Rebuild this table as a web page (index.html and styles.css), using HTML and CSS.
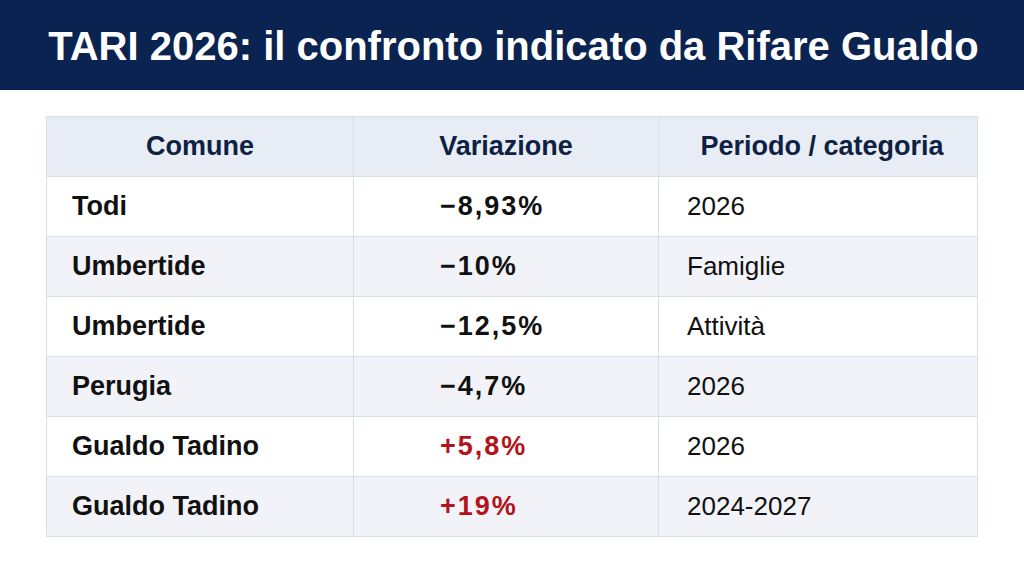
FILE: index.html
```html
<!DOCTYPE html>
<html lang="it">
<head>
<meta charset="utf-8">
<link rel="stylesheet" href="styles.css">
</head>
<body>
<header class="banner">
  <h1 class="title">TARI 2026: il confronto indicato da Rifare Gualdo</h1>
</header>
<main class="content">
  <table class="tari">
    <thead>
      <tr>
        <th class="c1">Comune</th>
        <th class="c2">Variazione</th>
        <th class="c3">Periodo / categoria</th>
      </tr>
    </thead>
    <tbody>
      <tr><td class="c1">Todi</td><td class="c2 neg">−8,93%</td><td class="c3">2026</td></tr>
      <tr><td class="c1">Umbertide</td><td class="c2 neg">−10%</td><td class="c3">Famiglie</td></tr>
      <tr><td class="c1">Umbertide</td><td class="c2 neg">−12,5%</td><td class="c3">Attività</td></tr>
      <tr><td class="c1">Perugia</td><td class="c2 neg">−4,7%</td><td class="c3">2026</td></tr>
      <tr><td class="c1">Gualdo Tadino</td><td class="c2 pos">+5,8%</td><td class="c3">2026</td></tr>
      <tr><td class="c1">Gualdo Tadino</td><td class="c2 pos">+19%</td><td class="c3">2024-2027</td></tr>
    </tbody>
  </table>
</main>
</body>
</html>
```
FILE: styles.css
```css
html, body {
  margin: 0;
  padding: 0;
  background: #ffffff;
  font-family: "Liberation Sans", Arial, sans-serif;
}
.banner {
  height: 90px;
  background: #0b2350;
  display: flex;
  align-items: center;
  justify-content: center;
}
.title {
  margin: 0;
  color: #ffffff;
  font-size: 40px;
  font-weight: 700;
  line-height: 1;
  padding-top: 2px;
  padding-left: 3px;
}
.content {
  padding: 26px 46px 0 46px;
}
.tari {
  width: 932px;
  border-collapse: collapse;
  table-layout: fixed;
  border: 1px solid #d9dfe8;
}
.tari th, .tari td {
  height: 59px;
  border: 1px solid #d9dfe8;
  padding: 0;
  vertical-align: middle;
}
.tari th {
  background: #e8edf5;
  color: #0f2142;
  font-size: 27px;
  font-weight: 700;
  text-align: center;
}
.tari th.c1 { width: 306px; }
.tari th.c2 { width: 304px; }
.tari th.c3 { padding-left: 8px; }
.tari td {
  font-size: 27px;
  color: #111111;
}
.tari tbody tr:nth-child(even) td { background: #f1f3f8; }
.tari td.c1 {
  font-weight: 700;
  padding-left: 25px;
}
.tari td.c2 {
  font-weight: 700;
  letter-spacing: 2px;
  padding-left: 86px;
}
.tari td.c3 {
  font-weight: 400;
  font-size: 26px;
  padding-left: 28px;
}
.tari td.pos { color: #b3141c; }
```
